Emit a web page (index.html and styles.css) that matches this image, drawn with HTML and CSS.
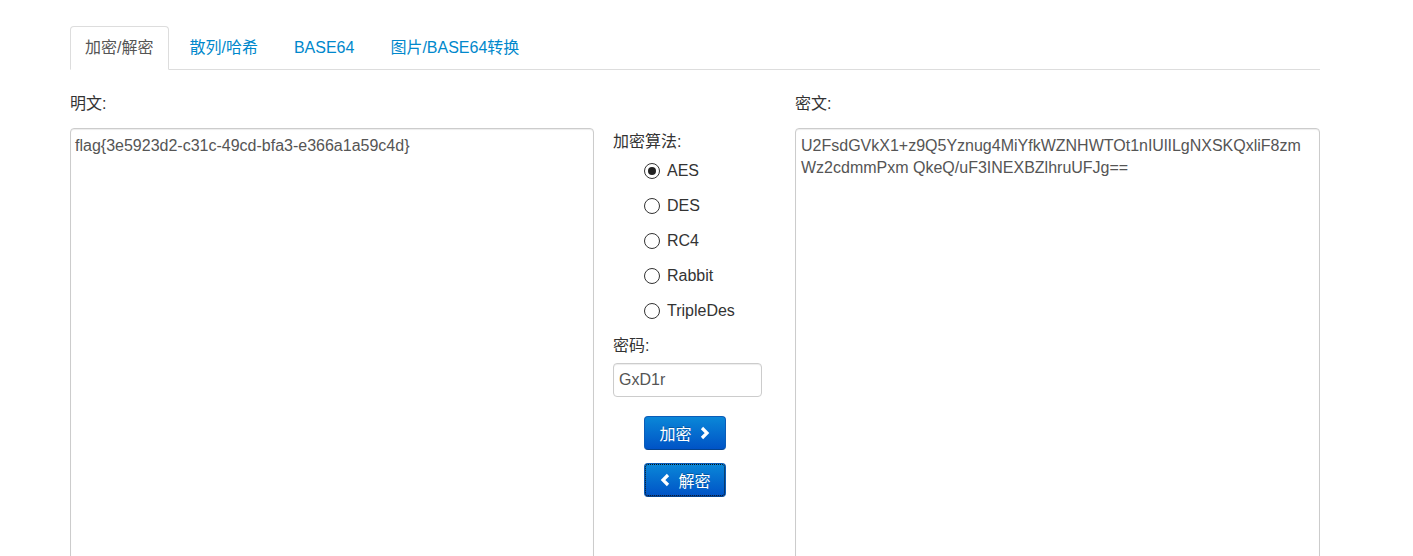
FILE: index.html
```html
<!DOCTYPE html>
<html lang="zh-CN">
<head>
<meta charset="utf-8">
<title>加密/解密</title>
<link rel="stylesheet" href="styles.css">
</head>
<body>
<div class="container">
  <ul class="tabs">
    <li class="tab active"><a>加密/解密</a></li>
    <li class="tab"><a>散列/哈希</a></li>
    <li class="tab"><a>BASE64</a></li>
    <li class="tab"><a>图片/BASE64转换</a></li>
  </ul>
  <div class="form">
    <div class="col">
      <div class="label">明文:</div>
      <textarea class="area">flag{3e5923d2-c31c-49cd-bfa3-e366a1a59c4d}</textarea>
    </div>
    <div class="mid">
      <div class="mid-label">加密算法:</div>
      <div class="radios">
        <label class="radio"><span class="dot checked"></span>AES</label>
        <label class="radio"><span class="dot"></span>DES</label>
        <label class="radio"><span class="dot"></span>RC4</label>
        <label class="radio"><span class="dot"></span>Rabbit</label>
        <label class="radio"><span class="dot"></span>TripleDes</label>
      </div>
      <div class="pw-label">密码:</div>
      <input class="pw" type="text" value="GxD1r">
      <div class="buttons">
        <button class="btn">加密 <svg class="chev" width="12" height="14" viewBox="0 0 12 14"><path d="M3 2 L8 7 L3 12" fill="none" stroke="#fff" stroke-width="3.2" stroke-linejoin="miter"/></svg></button>
        <button class="btn focus"><svg class="chev" width="12" height="14" viewBox="0 0 12 14"><path d="M9 2 L4 7 L9 12" fill="none" stroke="#fff" stroke-width="3.2" stroke-linejoin="miter"/></svg> 解密</button>
      </div>
    </div>
    <div class="col">
      <div class="label">密文:</div>
      <textarea class="area">U2FsdGVkX1+z9Q5Yznug4MiYfkWZNHWTOt1nIUlILgNXSKQxliF8zm
Wz2cdmmPxm QkeQ/uF3INEXBZlhruUFJg==</textarea>
    </div>
  </div>
</div>
</body>
</html>
```

FILE: styles.css
```css
html, body {
  margin: 0;
  padding: 0;
  background: #fff;
  overflow: hidden;
}
body {
  font-family: "Liberation Sans", "Noto Sans CJK SC", Arial, sans-serif;
  font-size: 16px;
  line-height: 22px;
  color: #333;
}
.container {
  width: 1250px;
  margin-left: 70px;
  padding-top: 26px;
}
.tabs {
  list-style: none;
  margin: 0;
  padding: 0;
  display: flex;
  gap: 5px;
  border-bottom: 1px solid #ddd;
}
.tab {
  margin-bottom: -1px;
}
.tab a {
  display: block;
  padding: 10px 15px 10px 14px;
  border: 1px solid transparent;
  border-radius: 4px 4px 0 0;
  color: #0088cc;
  cursor: pointer;
}
.tab.active a {
  color: #555;
  background: #fff;
  border-color: #ddd #ddd transparent #ddd;
}
.form {
  display: grid;
  grid-template-columns: 524px 1fr 525px;
  margin-top: 22px;
}
.col {
  display: flex;
  flex-direction: column;
}
.label {
  line-height: 24px;
  margin-bottom: 12px;
}
.area {
  box-sizing: border-box;
  width: 100%;
  height: 460px;
  margin: 0;
  padding: 6px 5px 6px 4px;
  border: 1px solid #ccc;
  border-radius: 4px;
  font-family: inherit;
  font-size: 16px;
  line-height: 22px;
  color: #555;
  resize: none;
  box-shadow: inset 0 1px 1px rgba(0,0,0,0.075);
  outline: none;
}
.col:last-child .area {
  padding-left: 5px;
}
.mid {
  padding-left: 19px;
  padding-top: 39px;
  display: flex;
  flex-direction: column;
}
.mid-label {
  line-height: 22px;
}
.radios {
  display: flex;
  flex-direction: column;
  padding-left: 31px;
}
.radio {
  height: 35px;
  display: flex;
  align-items: center;
  gap: 7px;
}
.dot {
  box-sizing: border-box;
  width: 16px;
  height: 16px;
  border: 1px solid #333;
  border-radius: 50%;
  background: #fff;
  position: relative;
}
.dot.checked::after {
  content: "";
  position: absolute;
  left: 3px;
  top: 3px;
  width: 8px;
  height: 8px;
  border-radius: 50%;
  background: #222;
}
.pw-label {
  margin-top: 7px;
  line-height: 22px;
}
.pw {
  box-sizing: border-box;
  width: 149px;
  height: 34px;
  margin-top: 6px;
  padding: 4px 5px;
  border: 1px solid #ccc;
  border-radius: 4px;
  font-family: inherit;
  font-size: 16px;
  color: #555;
  box-shadow: inset 0 1px 1px rgba(0,0,0,0.075);
  outline: none;
}
.buttons {
  display: flex;
  flex-direction: column;
  gap: 13px;
  margin-top: 19px;
  padding-left: 31px;
}
.btn {
  box-sizing: border-box;
  width: 82px;
  height: 34px;
  display: flex;
  align-items: center;
  justify-content: center;
  gap: 7px;
  padding: 0;
  font-family: inherit;
  font-size: 16px;
  color: #fff;
  text-shadow: 0 -1px 0 rgba(0,0,0,0.25);
  background: linear-gradient(to bottom, #0a87d8, #0053c6);
  border: 1px solid #0a5cb8;
  border-bottom-color: #04438f;
  border-radius: 4px;
  cursor: pointer;
}
.btn.focus {
  outline: 1px dotted #111;
  outline-offset: -2px;
}
.chev {
  display: block;
}
```
